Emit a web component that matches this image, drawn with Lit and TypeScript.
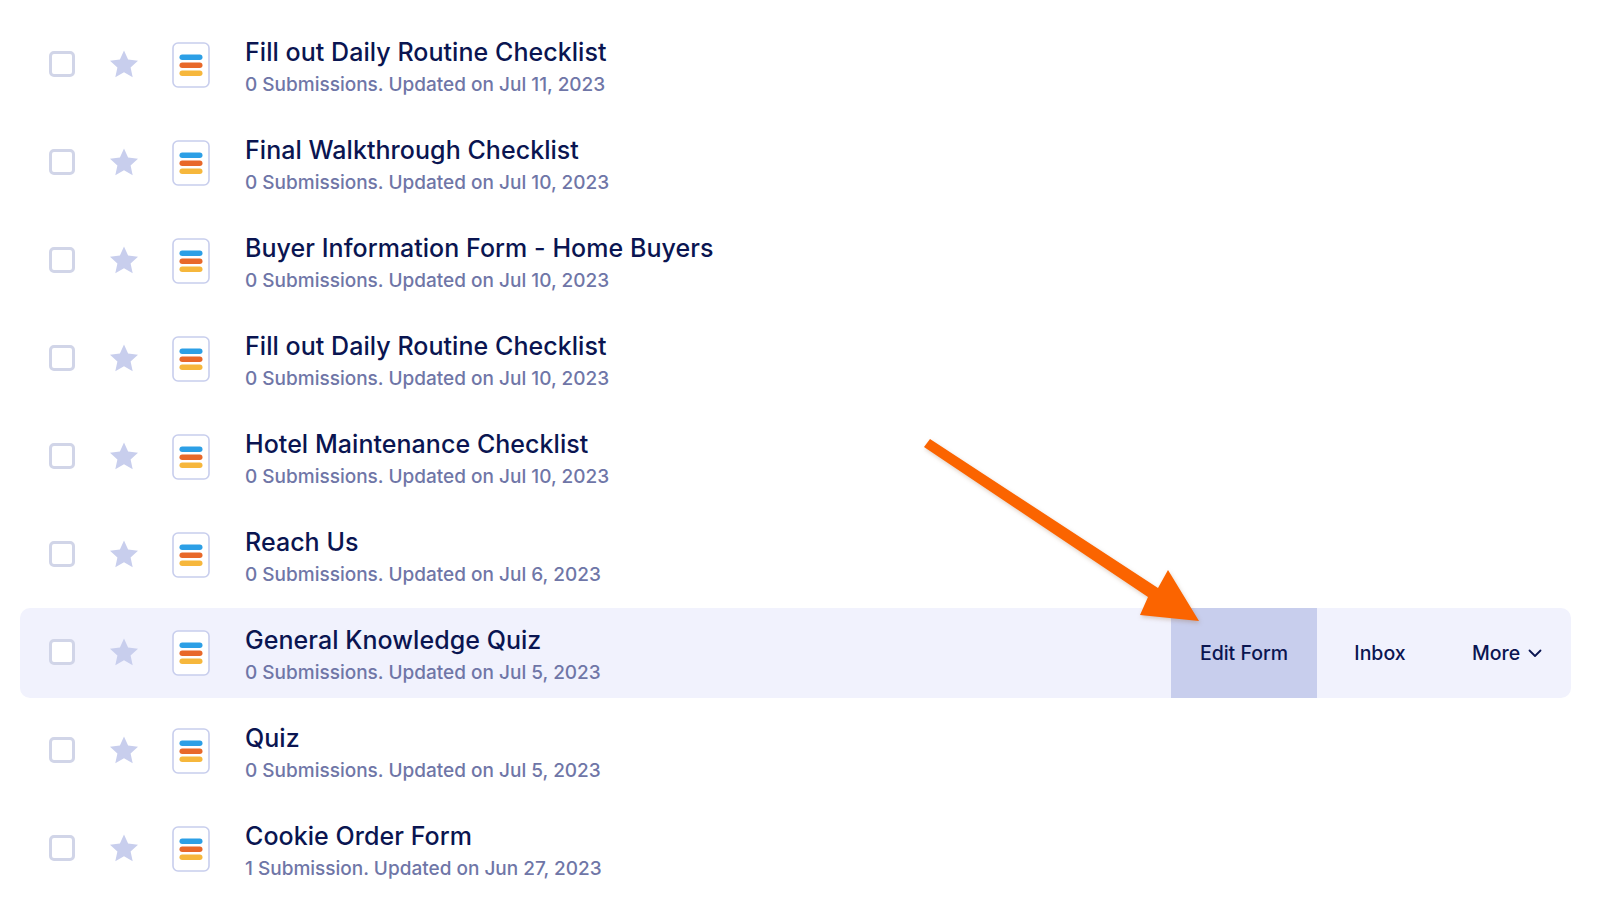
import { LitElement, html, css, svg } from "lit";
import { customElement } from "lit/decorators.js";

const rows = [
  ["Fill out Daily Routine Checklist", "0 Submissions. Updated on Jul 11, 2023"],
  ["Final Walkthrough Checklist", "0 Submissions. Updated on Jul 10, 2023"],
  ["Buyer Information Form - Home Buyers", "0 Submissions. Updated on Jul 10, 2023"],
  ["Fill out Daily Routine Checklist", "0 Submissions. Updated on Jul 10, 2023"],
  ["Hotel Maintenance Checklist", "0 Submissions. Updated on Jul 10, 2023"],
  ["Reach Us", "0 Submissions. Updated on Jul 6, 2023"],
  ["General Knowledge Quiz", "0 Submissions. Updated on Jul 5, 2023"],
  ["Quiz", "0 Submissions. Updated on Jul 5, 2023"],
  ["Cookie Order Form", "1 Submission. Updated on Jun 27, 2023"],
];

@customElement("app-root")
export class AppRoot extends LitElement {
  static styles = css`
    :host { display: block; width: 1600px; height: 900px; overflow: hidden; position: relative; background: #fff;
      font-family: "Inter", "Noto Sans", sans-serif; }
    .list { display: flex; flex-direction: column; gap: 8px; padding: 20px 29px 0 20px; }
    .row { height: 90px; flex: none; display: flex; align-items: center; border-radius: 10px; padding-left: 29px; }
    .row.active { background: #f1f2fd; }
    .check { width: 26px; height: 26px; box-sizing: border-box; border: 3px solid #d1d5e8; border-radius: 5px; background: #fff; flex: none; margin-top: -3px; }
    .star { width: 30px; height: 30px; margin-left: 34px; flex: none; margin-top: -3px; }
    .doc { width: 38px; height: 46px; margin-left: 33px; flex: none; }
    .text { margin-left: 35px; flex: 1; min-width: 0; margin-top: 4px; }
    .title { font-size: 25px; line-height: 32px; font-weight: 550; color: #0a1551; white-space: nowrap; letter-spacing: 0.05px; }
    .sub { font-size: 19px; line-height: 26px; margin-top: 4px; font-weight: 500; color: #6f76a7; white-space: nowrap; }
    .actions { display: flex; align-self: stretch; align-items: stretch; }
    .act { display: flex; align-items: center; justify-content: center; font-size: 19.5px; color: #0a1551; font-weight: 500; }
    .edit { width: 146px; background: #c8ceed; }
    .inbox { width: 126px; }
    .more { width: 128px; gap: 8px; }
    .arrow { position: absolute; left: 0; top: 0; width: 1600px; height: 900px; pointer-events: none; filter: drop-shadow(1px 2px 2px rgba(140, 90, 50, 0.3)); }
  `;

  render() {
    return html`
      <div class="list">
        ${rows.map(([t, s], i) => html`
          <div class="row ${i === 6 ? "active" : ""}">
            <div class="check"></div>
            <svg class="star" viewBox="0 0 30 30"><path d="M15 1.5l4.1 9.1 9.9 1.1-7.4 6.7 2.1 9.8L15 23.2l-8.7 5 2.1-9.8L1 11.7l9.9-1.1z" fill="#c8ceed"/></svg>
            <svg class="doc" viewBox="0 0 38 46">
              <rect x="1" y="1" width="36" height="44" rx="5" fill="#fff" stroke="#c8ceed" stroke-width="1.6"/>
              <rect x="7.5" y="12.5" width="23" height="5.5" rx="2.7" fill="#2c9fe6"/>
              <rect x="7.5" y="20.5" width="23" height="5.5" rx="2.7" fill="#e8682a"/>
              <rect x="7.5" y="28.5" width="23" height="5.5" rx="2.7" fill="#f6b73c"/>
            </svg>
            <div class="text">
              <div class="title">${t}</div>
              <div class="sub">${s}</div>
            </div>
            ${i === 6 ? html`
              <div class="actions">
                <div class="act edit">Edit Form</div>
                <div class="act inbox">Inbox</div>
                <div class="act more">More
                  <svg width="14" height="9" viewBox="0 0 14 9"><path d="M1.5 1.5L7 7l5.5-5.5" fill="none" stroke="#0a1551" stroke-width="1.8" stroke-linecap="round" stroke-linejoin="round"/></svg>
                </div>
              </div>` : ""}
          </div>`)}
      </div>
      <svg class="arrow" viewBox="0 0 1600 900">
        ${svg`<path d="M930 439L1158 588L1168 570L1199 621L1140 615L1148 597L924 447Z" fill="#fb6400"/>`}
      </svg>
    `;
  }
}
